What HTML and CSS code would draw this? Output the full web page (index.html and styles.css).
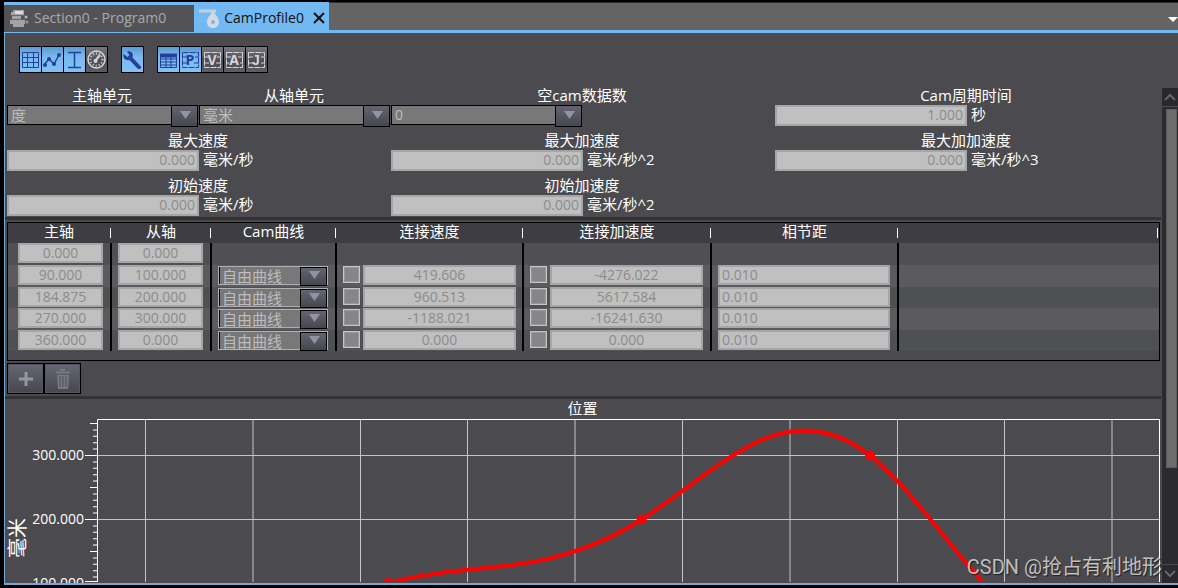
FILE: index.html
```html
<!DOCTYPE html>
<html lang="zh-CN">
<head>
<meta charset="utf-8">
<title>CamProfile0</title>
<link rel="stylesheet" href="styles.css">
</head>
<body>
<div class="window">
  <header class="tabs">
    <div class="tab-list">
      <button class="tab" type="button">
        <svg class="tab-icon" width="20" height="18" viewBox="0 0 20 18"><g fill="#a4a4a6"><path d="M4 1h11v5H2V3h2z"/><rect x="3" y="7" width="9" height="3"/><rect x="1" y="11" width="15" height="4"/><rect x="4" y="15" width="11" height="3"/></g><path d="M6 2h8v3H6z" fill="#dcdcdc"/><circle cx="17" cy="8" r="1.500" fill="#bbb"/><circle cx="18" cy="13" r="1.500" fill="#999"/><path d="M1 6.500h15M2 10.500h14" stroke="#666"/></svg>
        <span>Section0 - Program0</span>
      </button>
      <div class="tab tab-active">
        <svg class="tab-icon" width="20" height="20" viewBox="0 0 20 20"><path d="M1 1v9q0 4 6 4" fill="none" stroke="#93b9dc" stroke-width="1"/><path d="M0 3h17" stroke="#bcd2e6" stroke-width="3"/><path d="M14 2c1 4 6 7 6 12 0 8-12 8-12 0 0-5 5-8 6-12z" fill="#d3dae2"/><circle cx="14" cy="14" r="2" fill="#76b5ee"/></svg>
        <span>CamProfile0</span>
        <button class="tab-close" type="button" aria-label="Close"><svg width="12" height="12" viewBox="0 0 12 12"><path d="M1 1l10 10M11 1L1 11" stroke="#111" stroke-width="2"/></svg></button>
      </div>
    </div>
    <div class="tab-space"><button class="tab-menu" type="button" aria-label="Tabs"></button></div>
  </header>
  <main class="editor">
    <div class="toolbar">
      <div class="tools">
        <button class="tool on" type="button" aria-label="Grid"><svg viewBox="0 0 21 25"><path d="M2.500 5.500h16v15h-16zM2.500 10.500h16M2.500 15.500h16M7.500 5.500v15M13.500 5.500v15"/></svg></button>
        <button class="tool on" type="button" aria-label="Points"><svg viewBox="0 0 21 25"><path d="M2 18l5-6 5 5 5-9" stroke-width="1.500"/><g class="solid"><circle cx="3" cy="18" r="2"/><circle cx="7" cy="12" r="2"/><circle cx="12" cy="17" r="2"/><circle cx="17" cy="8" r="2"/></g></svg></button>
        <button class="tool on" type="button" aria-label="Range"><svg viewBox="0 0 21 25"><path d="M4 5.500h13M4 20.500h13M10.500 5v15" stroke-width="1.500"/></svg></button>
        <button class="tool" type="button" aria-label="Speed"><svg viewBox="0 0 21 25"><circle cx="10.500" cy="12.500" r="8.500" stroke-width="1.500"/><circle cx="10.500" cy="12.500" r="6" stroke-dasharray="1 2" stroke-width="2"/><path d="M9 14l5-6" stroke-width="2"/><circle class="solid" cx="9.500" cy="14" r="2"/></svg></button>
      </div>
      <div class="tools">
        <button class="tool on" type="button" aria-label="Settings"><svg viewBox="0 0 21 25"><path class="solid" d="M5 4.500c4-1 7 2 5.500 6l8 8.500c2 2-1 4-3 2.500l-8-8.500c-4 1-7-2-6-6l4 3 2-2z"/></svg></button>
      </div>
      <div class="tools">
        <button class="tool on" type="button" aria-label="Table"><svg viewBox="0 0 21 25"><path d="M2.500 7.500h16v13h-16zM2.500 12h16M2.500 15h16M2.500 18h16M8 8v12M13 8v12"/><path d="M2 6.500h17v4H2z" class="solid"/></svg></button>
        <button class="tool on" type="button" aria-label="Position"><svg viewBox="0 0 21 25"><path d="M2.500 5.500h16v15h-16z" stroke-dasharray="6 1"/><path d="M3 10h4M3 16h4M15 10h4M14 16h5"/><text x="10" y="18">P</text></svg></button>
        <button class="tool" type="button" aria-label="Velocity"><svg viewBox="0 0 21 25"><path d="M2.500 5.500h16v15h-16z" stroke-dasharray="6 1"/><path d="M3 10h3M3 16h4M15 10h4M14 16h5"/><text x="10" y="18">V</text></svg></button>
        <button class="tool" type="button" aria-label="Acceleration"><svg viewBox="0 0 21 25"><path d="M2.500 5.500h16v15h-16z" stroke-dasharray="6 1"/><path d="M3 10h4M3 16h2M14 10h5M16 16h3"/><text x="10" y="18">A</text></svg></button>
        <button class="tool" type="button" aria-label="Jerk"><svg viewBox="0 0 21 25"><path d="M2.500 5.500h16v15h-16z" stroke-dasharray="6 1"/><path d="M3 10h4M3 16h4M15 10h4M15 16h4"/><text class="sans" x="10" y="18">J</text></svg></button>
      </div>
    </div>
    <div class="workspace">
      <div class="content">
        <form class="settings">
          <div class="field"><label for="master">主轴单元</label><div class="line"><span class="combo cjk"><select id="master" disabled><option>度</option></select></span></div></div>
          <div class="field"><label for="slave">从轴单元</label><div class="line"><span class="combo cjk"><select id="slave" disabled><option>毫米</option></select></span></div></div>
          <div class="field wide"><label for="empty">空cam数据数</label><div class="line"><span class="combo"><select id="empty" disabled><option>0</option></select></span></div></div>
          <div class="field wide"><label for="cycle">Cam周期时间</label><div class="line"><input id="cycle" value="1.000" disabled><span>秒</span></div></div>
          <div class="field wide"><label for="vmax">最大速度</label><div class="line"><input id="vmax" value="0.000" disabled><span>毫米/秒</span></div></div>
          <div class="field wide"><label for="amax">最大加速度</label><div class="line"><input id="amax" value="0.000" disabled><span>毫米/秒^2</span></div></div>
          <div class="field wide"><label for="jmax">最大加加速度</label><div class="line"><input id="jmax" value="0.000" disabled><span>毫米/秒^3</span></div></div>
          <div class="field wide"><label for="v0">初始速度</label><div class="line"><input id="v0" value="0.000" disabled><span>毫米/秒</span></div></div>
          <div class="field wide"><label for="a0">初始加速度</label><div class="line"><input id="a0" value="0.000" disabled><span>毫米/秒^2</span></div></div>
        </form>
        <div class="splitter"></div>
        <div class="grid-box">
          <table class="points">
            <colgroup><col class="c-master"><col class="c-slave"><col class="c-curve"><col class="c-speed"><col class="c-accel"><col class="c-pitch"><col></colgroup>
            <thead><tr><th>主轴</th><th>从轴</th><th>Cam曲线</th><th>连接速度</th><th>连接加速度</th><th>相节距</th><th></th></tr></thead>
            <tbody>
              <tr><td><input aria-label="主轴" value="0.000" disabled></td><td><input aria-label="从轴" value="0.000" disabled></td><td></td><td></td><td></td><td></td><td></td></tr>
              <tr><td><input aria-label="主轴" value="90.000" disabled></td><td><input aria-label="从轴" value="100.000" disabled></td><td><span class="combo small cjk"><select aria-label="Cam曲线" disabled><option>自由曲线</option></select></span></td><td><div class="pair"><input type="checkbox" aria-label="连接速度" disabled><input aria-label="连接速度" value="419.606" disabled></div></td><td><div class="pair"><input type="checkbox" aria-label="连接加速度" disabled><input aria-label="连接加速度" value="-4276.022" disabled></div></td><td><input class="pitch" aria-label="相节距" value="0.010" disabled></td><td></td></tr>
              <tr><td><input aria-label="主轴" value="184.875" disabled></td><td><input aria-label="从轴" value="200.000" disabled></td><td><span class="combo small cjk"><select aria-label="Cam曲线" disabled><option>自由曲线</option></select></span></td><td><div class="pair"><input type="checkbox" aria-label="连接速度" disabled><input aria-label="连接速度" value="960.513" disabled></div></td><td><div class="pair"><input type="checkbox" aria-label="连接加速度" disabled><input aria-label="连接加速度" value="5617.584" disabled></div></td><td><input class="pitch" aria-label="相节距" value="0.010" disabled></td><td></td></tr>
              <tr><td><input aria-label="主轴" value="270.000" disabled></td><td><input aria-label="从轴" value="300.000" disabled></td><td><span class="combo small cjk"><select aria-label="Cam曲线" disabled><option>自由曲线</option></select></span></td><td><div class="pair"><input type="checkbox" aria-label="连接速度" disabled><input aria-label="连接速度" value="-1188.021" disabled></div></td><td><div class="pair"><input type="checkbox" aria-label="连接加速度" disabled><input aria-label="连接加速度" value="-16241.630" disabled></div></td><td><input class="pitch" aria-label="相节距" value="0.010" disabled></td><td></td></tr>
              <tr><td><input aria-label="主轴" value="360.000" disabled></td><td><input aria-label="从轴" value="0.000" disabled></td><td><span class="combo small cjk"><select aria-label="Cam曲线" disabled><option>自由曲线</option></select></span></td><td><div class="pair"><input type="checkbox" aria-label="连接速度" disabled><input aria-label="连接速度" value="0.000" disabled></div></td><td><div class="pair"><input type="checkbox" aria-label="连接加速度" disabled><input aria-label="连接加速度" value="0.000" disabled></div></td><td><input class="pitch" aria-label="相节距" value="0.010" disabled></td><td></td></tr>
            </tbody>
          </table>
        </div>
        <div class="actions">
          <button class="action" type="button" aria-label="Add" disabled><svg width="16" height="16" viewBox="0 0 16 16"><path d="M8 1v14M1 8h14" stroke="#96969e" stroke-width="3"/></svg></button>
          <button class="action" type="button" aria-label="Delete" disabled><svg width="16" height="20" viewBox="0 0 16 20"><path d="M5 1h5M1 3.500h14" stroke="#777882" stroke-width="2"/><path d="M2 6h12l-1 14H3z" fill="#777882"/><path d="M5 7v11M8 7v11M11 7v11" stroke="#4c4d58" stroke-width="1"/></svg></button>
        </div>
        <div class="splitter"></div>
        <section class="chart">
          <h2 class="chart-title">位置</h2>
          <div class="chart-body">
            <div class="axis-name">毫米</div>
            <div class="axis-labels"><span>300.000</span><span>200.000</span><span>100.000</span></div>
            <svg class="ticks" width="12" height="163" viewBox="0 0 12 163"><g stroke="#fff"><path d="M0 36.500h12M0 100.500h12M0 162.500h12"/><path d="M8 4v159" stroke-width="6" stroke-dasharray="1 31"/><path d="M10 4v159" stroke-width="4" stroke-dasharray="1 5.400"/></g></svg>
            <svg class="plot" height="163" viewBox="97 419 1063 163" preserveAspectRatio="none">
              <g class="gridlines"><path d="M145.500 419v164M253 419v164M360.500 419v164M467.500 419v164M575 419v164M682.500 419v164M790 419v164M897.500 419v164M1004.500 419v164M1112 419v164M97 455.500h1063M97 519.500h1063"/></g>
              <path class="frame" d="M97.500 583V419.500H1159.500V583"/>
              <path class="curve" d="M387 583.500C429.400 571.700 472 570.100 514.400 564.800C556.800 559.500 599.300 546.500 641.700 519.500C679.800 495.300 717.800 461 755.900 442.600C794 424.200 831.900 425.600 870 455.500C910.300 487.200 950.500 548.600 990.800 591.400"/>
              <path class="knots" d="M388 583h.010M641.700 519.500h.010M870 455.500h.010"/>
            </svg>
          </div>
        </section>
      </div>
      <div class="scrollbar">
        <button class="scroll-end" type="button" aria-label="Up"><svg width="14" height="10" viewBox="0 0 14 10"><path d="M2 8l5-5 5 5" fill="none" stroke="#66666a" stroke-width="2"/></svg></button>
        <div class="track"><div class="thumb"></div></div>
        <button class="scroll-end" type="button" aria-label="Down"><svg width="14" height="10" viewBox="0 0 14 10"><path d="M2 2l5 5 5-5" fill="none" stroke="#66666a" stroke-width="2"/></svg></button>
      </div>
    </div>
  </main>
  <div class="watermark">CSDN @抢占有利地形</div>
</div>
</body>
</html>
```
FILE: styles.css
```css
* { box-sizing: border-box; }

body {
  margin: 0;
  background: #000;
  color: #fff;
  font-family: "Open Sans", "Noto Sans CJK SC", sans-serif;
  font-size: 15px;
}

button, input, select { font: inherit; margin: 0; padding: 0; border: 0; }

button { display: flex; align-items: center; justify-content: center; background: none; }

.window {
  position: relative;
  display: flex;
  flex-direction: column;
  height: 100vh;
  padding: 2px 0 3px 4px;
  overflow: hidden;
}

.tabs { display: flex; height: 31px; }
.tab-list { display: flex; background: #72b8f2; }

.tab {
  display: flex;
  align-items: center;
  align-self: flex-end;
  height: 27px;
  margin-bottom: 1px;
  padding: 0 28px 2px 5px;
  gap: 5px;
  background: #535357;
  color: #a9a9ab;
  font-size: 14px;
}

.tab-active { height: 31px; margin: 0; padding: 0 3px 0 5px; background: #72b8f2; color: #111; }
.tab-close { width: 14px; height: 20px; margin-left: 3px; }

.tab-space {
  flex: 1;
  display: flex;
  justify-content: flex-end;
  align-items: center;
  background: #646464;
  border-top: 1px solid #2c2c2c;
  border-bottom: 3px solid #72b8f2;
}

.tab-menu { width: 10px; height: 5px; margin-top: 6px; background: #fff; clip-path: polygon(0 0, 100% 0, 50% 100%); }

.editor {
  flex: 1;
  min-height: 0;
  display: flex;
  flex-direction: column;
  background: #4b4a4e;
  border: solid #72a9d8;
  border-width: 0 0 2px 1px;
}

.toolbar { display: flex; gap: 13px; height: 51px; padding: 13px 14px 0; }
.tools { display: flex; gap: 1px; height: 27px; padding: 1px; background: #000; }
.tool { width: 21px; height: 25px; background: linear-gradient(#77777d, #4a4a51 60%, #5e5e66); color: #d6d6da; }
.tool.on { background: linear-gradient(#5e9bce, #78b9ef 40%, #80c2f7); color: #24409c; }
.tool svg { width: 21px; height: 25px; fill: none; stroke: currentColor; }
.tool .solid { fill: currentColor; stroke: none; }
.tool text { fill: currentColor; stroke: none; font: bold 14px "Open Sans", sans-serif; text-anchor: middle; }
.tool .sans { font-family: "Liberation Sans", sans-serif; }

.workspace { flex: 1; min-height: 0; display: flex; }
.content { flex: 1; min-width: 0; overflow: hidden; }

.settings { display: grid; grid-template-columns: repeat(6, 1fr); height: 133px; padding: 0 3px 0 2px; grid-auto-rows: 45px; }
.field { min-width: 0; }
.wide { grid-column: span 2; }
.field label { display: block; height: 21px; padding-right: 2px; line-height: 22px; text-align: center; white-space: nowrap; }
.line { display: flex; line-height: 19px; white-space: nowrap; }
.line input + span { margin-left: 4px; }
.line input { width: 192px; }
.line .combo { width: 191px; }

input:not([type="checkbox"]) {
  height: 21px;
  padding: 0 2px 2px;
  background: #c0c0c0;
  border: 2px solid #a6a6a6;
  border-radius: 0;
  color: #8c8c8c;
  font-size: 14px;
  line-height: 15px;
  text-align: right;
}

.combo { position: relative; display: block; height: 20px; }

.combo select {
  appearance: none;
  display: block;
  width: 100%;
  height: 100%;
  padding: 0 26px 0 3px;
  background: #787878;
  border: 1px solid #000;
  border-radius: 0;
  color: #bdbdbd;
  opacity: 1;
  font-size: 14px;
  line-height: 16px;
}

.combo.cjk select { font-size: 15px; }

.combo::before {
  content: "";
  position: absolute;
  top: 0;
  right: 0;
  width: 25px;
  height: 100%;
  background: linear-gradient(#63646f, #454650);
  border: 1px solid #000;
}

.combo::after {
  content: "";
  position: absolute;
  top: 6px;
  right: 7px;
  width: 11px;
  height: 8px;
  background: #9292a0;
  clip-path: polygon(0 0, 100% 0, 50% 100%);
}

.combo.small { width: 110px; height: 19px; }
.combo.small select { border-color: #b0b0b0; box-shadow: inset 1px 0 #000; }
.combo.small::before { top: 1px; right: 1px; height: 17px; }
.combo.small::after { top: 5px; right: 8px; }

.splitter { height: 3px; margin-right: 1px; background: #333; }

.grid-box { height: 139px; margin: 2px 2px 2px; border: 1px solid #000; }

.points { width: 100%; border-collapse: separate; border-spacing: 0; table-layout: fixed; }
.c-master { width: 104px; }
.c-slave { width: 100px; }
.c-curve { width: 125px; }
.c-speed, .c-pitch { width: 187px; }
.c-accel { width: 188px; }

.points th {
  height: 20px;
  padding: 0 2px 4px 0;
  background: linear-gradient(#fff, #fff) right 1px center / 1px 10px no-repeat #3d3d43;
  font-weight: normal;
  line-height: 16px;
}

.points td { height: 22px; padding: 0 0 1px 6px; border-right: 2px solid #000; vertical-align: top; }
.points tbody tr:nth-child(2n + 3) td { height: 21px; }
.points td:first-child { padding-left: 10px; }
.points td:last-child { border-right: 0; }
.points tr:nth-child(odd) td { background: #4f5054; }
.points tr:nth-child(even) td { background: #5b5a5f; }
.points td input:not([type="checkbox"]) { display: block; width: 85px; height: 20px; padding-bottom: 1px; text-align: center; }
.points td .pair input:not([type="checkbox"]) { width: 153px; }
.points td input.pitch:not([type="checkbox"]) { width: 172px; text-align: left; }
.pair { display: flex; gap: 3px; }

.points .combo { margin-top: 1px; }

.pair input[type="checkbox"] {
  appearance: none;
  width: 17px;
  height: 17px;
  margin-top: 1px;
  background: #85858a;
  border: 1px solid #c6c6c6;
  box-shadow: inset 0 0 0 1px #97979a;
}

.actions { display: flex; padding: 0 2px; margin-bottom: 2px; }
.action { width: 37px; height: 31px; background: linear-gradient(#666772, #454650); border: 1px solid #000; box-shadow: inset 0 0 0 1px #555662; }

.chart-title { height: 20px; margin: 0; padding-right: 2px; font-size: 15px; font-weight: normal; line-height: 18px; text-align: center; }
.chart-body { display: flex; height: 163px; padding-right: 2px; }
.axis-name { width: 20px; margin: 98px 0 0 3px; font-size: 20px; line-height: 20px; writing-mode: vertical-rl; text-orientation: sideways; transform: rotate(180deg); height: 41px; white-space: nowrap; }
.axis-labels { flex: none; display: flex; flex-direction: column; width: 57px; padding: 4px 1px 0 0; font-size: 14px; line-height: 64px; text-align: right; }
.axis-labels span { height: 64px; }
.ticks { flex: none; overflow: hidden; }
.plot { flex: 1; min-width: 0; fill: none; }
.plot path { vector-effect: non-scaling-stroke; }
.gridlines { stroke: #c4c4c4; stroke-width: 1; }
.frame { stroke: #fff; }
.curve { stroke: #f00; stroke-width: 4; }
.knots { stroke: #f00; stroke-width: 10; stroke-linecap: round; }

.scrollbar { display: flex; flex-direction: column; width: 16px; margin-top: 4px; background: #2b2b2d; }
.scroll-end { height: 19px; background: #29292b; border-bottom: 1px solid #4b4a4e; }
.scroll-end:last-child { border-top: 1px solid #4b4a4e; border-bottom: 0; }
.track { flex: 1; padding: 2px 1px 0 4px; }
.thumb { height: 79%; background: #6c6c6c; border: 1px solid #5c5c5c; }

.watermark {
  position: absolute;
  right: 16px;
  bottom: 6px;
  color: rgba(255, 255, 255, 0.7);
  font-family: Roboto, "Noto Sans CJK SC", sans-serif;
  font-size: 20px;
  line-height: 30px;
  text-shadow: 1px 1px 1px rgba(0, 0, 0, 0.6);
}
```
